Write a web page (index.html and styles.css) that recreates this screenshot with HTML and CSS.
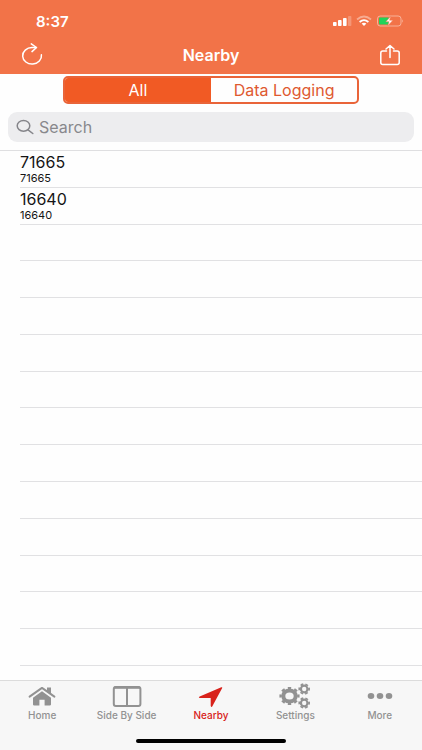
FILE: index.html
```html
<!DOCTYPE html>
<html lang="en">
<head>
<meta charset="utf-8">
<meta name="viewport" content="width=device-width, initial-scale=1">
<title>Nearby</title>
<link rel="stylesheet" href="styles.css">
</head>
<body>
<header class="header">
  <div class="status">
    <span class="time">8:37</span>
    <div class="indicators">
      <svg width="20" height="12" viewBox="0 0 20 12" fill="#fff" aria-hidden="true">
        <rect x="1" y="7" width="3.6" height="4" rx=".8"/><rect x="6" y="5" width="3.6" height="6" rx=".8"/><rect x="11" y="3" width="3.6" height="8" rx=".8"/><rect x="16" y="1" width="3.4" height="10" rx=".8" opacity=".25"/>
      </svg>
      <svg width="16" height="12" viewBox="0 0 16 12" fill="none" stroke="#fff" stroke-width="1.8" aria-hidden="true">
        <path d="M1 4.5Q8-1.5 15 4.5" opacity=".4"/><path d="M3.6 7Q8 3.2 12.4 7"/><path d="M5.6 8.6Q8 6.9 10.4 8.6L8 11Z" fill="#fff" stroke="none"/>
      </svg>
      <svg width="28" height="12" viewBox="0 0 28 12" aria-hidden="true">
        <rect x="1.5" y="1" width="23.5" height="10" rx="2.8" fill="none" stroke="#fff" opacity=".45"/>
        <path d="M26.3 4.3Q28 6 26.3 7.7Z" fill="#fff" opacity=".5"/>
        <rect x="3" y="2.5" width="10" height="7" rx="1" fill="#20d45a"/>
        <path d="M14.8 1.3 9.8 6.7H13L11.8 10.8 17 5.2H13.6Z" fill="#fff" stroke="#f27348" stroke-width=".5"/>
      </svg>
    </div>
  </div>
  <div class="nav">
    <button class="icon-button" aria-label="Refresh">
      <svg width="24" height="24" viewBox="0 0 24 24" fill="none" stroke="#fff" stroke-width="1.5" stroke-linecap="round" stroke-linejoin="round"><path d="M21.4 11.8A9.4 8.3 0 1 1 12 4.5H16.2"/><path d="M11.3.9 16.5 4.5 12 8.6"/></svg>
    </button>
    <h1 class="title">Nearby</h1>
    <button class="icon-button" aria-label="Share">
      <svg width="24" height="24" viewBox="0 0 24 24" fill="none" stroke="#fff" stroke-width="1.5" stroke-linecap="round" stroke-linejoin="round"><path d="M8.5 8H4.8Q2.8 8 2.8 10V19.5Q2.8 21.5 4.8 21.5H19.2Q21.2 21.5 21.2 19.5V10Q21.2 8 19.2 8H15.5M12 14.5V2.5M8 6 12 2.5 16 6"/></svg>
    </button>
  </div>
</header>
<main class="main">
  <div class="filters">
    <div class="segments">
      <button class="segment selected" aria-pressed="true">All</button>
      <button class="segment" aria-pressed="false">Data Logging</button>
    </div>
    <label class="search">
      <svg width="18" height="16" viewBox="0 0 18 16" fill="none" stroke="#85858a" stroke-width="1.5" stroke-linecap="round" aria-hidden="true"><ellipse cx="7.5" cy="6.8" rx="6.3" ry="5.4"/><path d="M12 10.8 16.8 14.5"/></svg>
      <input type="search" placeholder="Search" aria-label="Search">
    </label>
  </div>
  <ul class="list">
    <li class="row"><span class="name">71665</span><span class="detail">71665</span></li>
    <li class="row"><span class="name">16640</span><span class="detail">16640</span></li>
    <li class="row"></li><li class="row"></li><li class="row"></li><li class="row"></li>
    <li class="row"></li><li class="row"></li><li class="row"></li><li class="row"></li>
    <li class="row"></li><li class="row"></li><li class="row"></li><li class="row"></li>
  </ul>
</main>
<footer class="footer">
  <nav class="tabs">
    <a class="tab" href="#home">
      <svg width="32" height="26" viewBox="0 0 32 26" fill="#929292" aria-hidden="true"><path d="M16 8.2 25 14.8V21.4Q25 22.5 23.7 22.5H18.6V16.8H13.4V22.5H8.3Q7 22.5 7 21.4V14.8Z"/><path d="M3.6 13.6 16 4.9 28.4 13.6" fill="none" stroke="#929292" stroke-width="2" stroke-linecap="round" stroke-linejoin="round"/><path d="M21 4.6H25V11.5L21 8.5Z"/></svg>
      <span>Home</span>
    </a>
    <a class="tab" href="#side">
      <svg width="32" height="26" viewBox="0 0 32 26" fill="none" stroke="#929292" aria-hidden="true"><rect x="2.8" y="4" width="26.6" height="19" rx="2" stroke-width="2"/><path d="M3 4.6H29" stroke-width="2.4"/><path d="M16 4V23" stroke-width="2"/></svg>
      <span>Side By Side</span>
    </a>
    <a class="tab active" href="#nearby" aria-current="page">
      <svg width="32" height="26" viewBox="0 0 32 26" fill="#d8221b" aria-hidden="true"><path d="M27.2 5 17.2 23.4Q16.2 24.6 15.7 23.1V15H5Q2.9 14.4 4.7 13.4L26.3 4.3Q27.6 4 27.2 5Z"/></svg>
      <span>Nearby</span>
    </a>
    <a class="tab" href="#settings">
      <svg width="32" height="26" viewBox="0 0 32 26" fill="none" stroke="#929292" aria-hidden="true">
        <g transform="translate(10.5 13)"><ellipse rx="6.2" ry="5.5" stroke-width="4"/><ellipse rx="8.9" ry="7.9" stroke-width="2.4" pathLength="16" stroke-dasharray="1" stroke-dashoffset=".5"/></g>
        <g transform="translate(25.2 6)"><circle r="3.3" stroke-width="2.2"/><circle r="4.9" stroke-width="1.8" pathLength="12" stroke-dasharray="1.1 .9" stroke-dashoffset=".5"/></g>
        <g transform="translate(25.2 20)"><circle r="3.3" stroke-width="2.2"/><circle r="4.9" stroke-width="1.8" pathLength="12" stroke-dasharray="1.1 .9" stroke-dashoffset=".5"/></g>
      </svg>
      <span>Settings</span>
    </a>
    <a class="tab" href="#more">
      <svg width="32" height="26" viewBox="0 0 32 26" fill="#929292" aria-hidden="true"><ellipse cx="7" cy="13" rx="3.3" ry="2.9"/><ellipse cx="16" cy="13" rx="3.3" ry="2.9"/><ellipse cx="25" cy="13" rx="3.3" ry="2.9"/></svg>
      <span>More</span>
    </a>
  </nav>
  <div class="home-bar"></div>
</footer>
</body>
</html>
```
FILE: styles.css
```css
* { box-sizing: border-box; }

body {
  margin: 0;
  min-height: 100vh;
  display: flex;
  flex-direction: column;
  background: #fefefe;
  color: #151515;
  font-family: Inter, "Liberation Sans", sans-serif;
}

button {
  border: 0;
  padding: 0;
  background: none;
  font: inherit;
}

svg { display: block; flex: none; }

.header {
  background: #f27348;
  color: #fff;
  padding-top: 12px;
}

.status {
  display: flex;
  justify-content: space-between;
  align-items: center;
  height: 18px;
  padding: 0 18px 0 36px;
}

.time { font-size: 15px; font-weight: 600; }

.indicators { display: flex; gap: 4px; }

.nav {
  display: flex;
  justify-content: space-between;
  align-items: center;
  height: 44px;
  padding: 6px 20px 0;
}

.icon-button { width: 24px; height: 24px; }

.title {
  margin: 0;
  font-size: 16px;
  line-height: 20px;
  font-weight: 600;
}

.main {
  flex: 1;
  display: flex;
  flex-direction: column;
}

.filters {
  padding: 2px 8px 8px;
  border-bottom: 1px solid #dfdfe1;
}

.segments {
  display: flex;
  width: 73%;
  height: 28px;
  margin: 0 auto 8px;
  border: 2px solid #e96439;
  border-radius: 5px;
  overflow: hidden;
}

.segment {
  flex: 1;
  color: #df5930;
  font-size: 16px;
}

.segment.selected {
  background: #f15a24;
  color: #fff;
}

.search {
  display: flex;
  align-items: center;
  gap: 5px;
  height: 30px;
  padding: 0 8px;
  border-radius: 9px;
  background: #ededef;
}

.search input {
  flex: 1;
  min-width: 0;
  border: 0;
  padding: 0;
  outline: 0;
  background: transparent;
  font: inherit;
  font-size: 16px;
}

.search input::placeholder { color: #88888c; }

.list {
  flex: 1;
  display: grid;
  grid-template-rows: repeat(14, 1fr);
  margin: 0;
  padding: 0 0 14px 20px;
  list-style: none;
}

.row {
  display: flex;
  flex-direction: column;
  justify-content: center;
  border-bottom: 1px solid #e1e1e3;
}

.name { font-size: 16px; line-height: 18px; }

.detail { font-size: 11px; line-height: 14px; }

.footer {
  border-top: 1px solid #dcdcdc;
  background: #f7f7f7;
  padding: 2px 0 7px;
}

.tabs {
  display: grid;
  grid-template-columns: repeat(5, 1fr);
}

.tab {
  display: flex;
  flex-direction: column;
  align-items: center;
  color: #929292;
  font-size: 10px;
  line-height: 12px;
  font-weight: 500;
  text-decoration: none;
}

.tab.active { color: #d8221b; }

.home-bar {
  width: 150px;
  height: 4px;
  margin: 18px auto 0;
  border-radius: 2px;
  background: #000;
}
```
